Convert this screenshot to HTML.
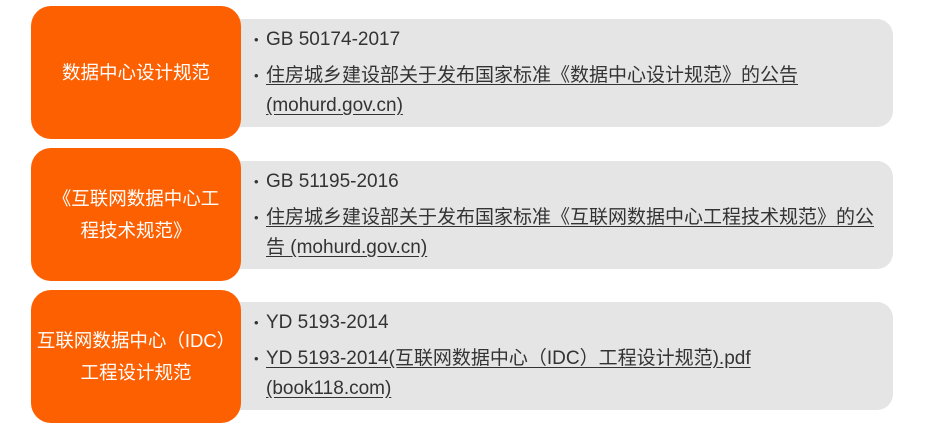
<!DOCTYPE html>
<html><head><meta charset="utf-8"><style>
*{margin:0;padding:0;box-sizing:border-box}
body{width:928px;height:427px;background:#fff;position:relative;overflow:hidden;font-family:"Liberation Sans","Noto Sans CJK SC",sans-serif}
.o{position:absolute;left:31px;width:210px;height:133px;background:#fd6000;border-radius:20px;color:#fff;font-size:18.5px;line-height:32px;display:flex;align-items:center;justify-content:center;text-align:center;z-index:2;white-space:nowrap}
.g{position:absolute;left:236px;width:657px;height:108px;background:#e5e5e5;border-radius:0 16px 16px 0;color:#333;font-size:19px}
.l{position:absolute;left:30px;white-space:nowrap;line-height:24px}
.l::before{content:"•";position:absolute;left:-12px;font-size:13px}
.c{position:absolute;left:30px;white-space:nowrap;line-height:24px}
u{text-decoration:underline;text-underline-offset:3px}
</style></head><body>
<div class="o" style="top:6px">数据中心设计规范</div>
<div class="g" style="top:19px">
<div class="l" style="top:9px">GB 50174-2017</div>
<div class="l" style="top:45px"><u>住房城乡建设部关于发布国家标准《数据中心设计规范》的公告</u></div>
<div class="c" style="top:75px"><u>(mohurd.gov.cn)</u></div>
</div>
<div class="o" style="top:148px"><div>《互联网数据中心工<br>程技术规范》</div></div>
<div class="g" style="top:161px">
<div class="l" style="top:9px">GB 51195-2016</div>
<div class="l" style="top:45px"><u>住房城乡建设部关于发布国家标准《互联网数据中心工程技术规范》的公</u></div>
<div class="c" style="top:75px"><u>告 (mohurd.gov.cn)</u></div>
</div>
<div class="o" style="top:290px"><div>互联网数据中心（IDC）<br>工程设计规范</div></div>
<div class="g" style="top:302px">
<div class="l" style="top:9px">YD 5193-2014</div>
<div class="l" style="top:45px"><u>YD 5193-2014(互联网数据中心（IDC）工程设计规范).pdf</u></div>
<div class="c" style="top:75px"><u>(book118.com)</u></div>
</div>
</body></html>
